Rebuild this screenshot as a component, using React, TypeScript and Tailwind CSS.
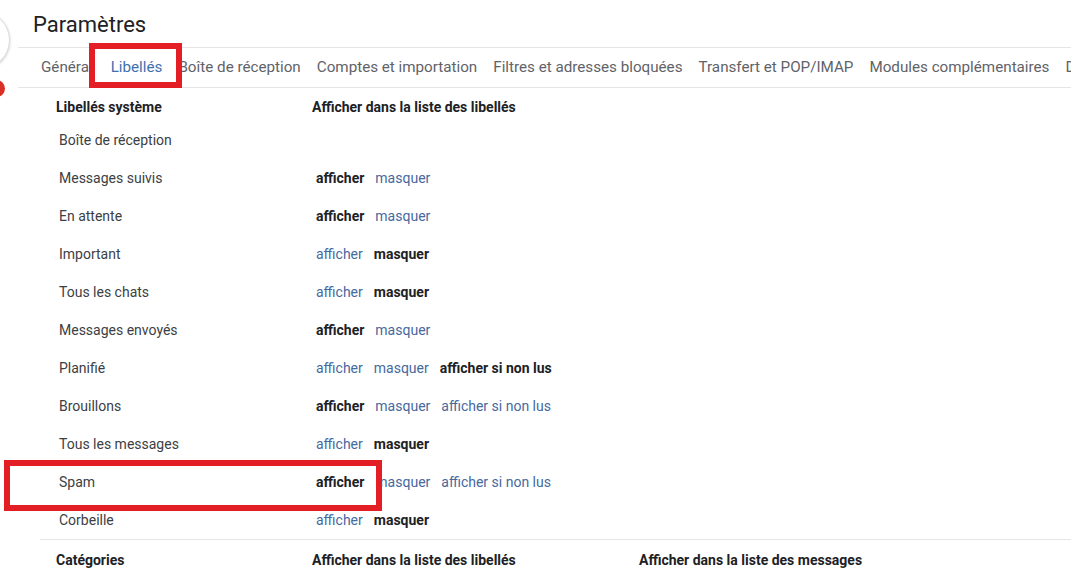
import React from "react";

type Item = { t: string; b: boolean };
const rows: { label: string; items: Item[] }[] = [
  { label: "Boîte de réception", items: [] },
  { label: "Messages suivis", items: [{ t: "afficher", b: true }, { t: "masquer", b: false }] },
  { label: "En attente", items: [{ t: "afficher", b: true }, { t: "masquer", b: false }] },
  { label: "Important", items: [{ t: "afficher", b: false }, { t: "masquer", b: true }] },
  { label: "Tous les chats", items: [{ t: "afficher", b: false }, { t: "masquer", b: true }] },
  { label: "Messages envoyés", items: [{ t: "afficher", b: true }, { t: "masquer", b: false }] },
  {
    label: "Planifié",
    items: [
      { t: "afficher", b: false },
      { t: "masquer", b: false },
      { t: "afficher si non lus", b: true },
    ],
  },
  {
    label: "Brouillons",
    items: [
      { t: "afficher", b: true },
      { t: "masquer", b: false },
      { t: "afficher si non lus", b: false },
    ],
  },
  { label: "Tous les messages", items: [{ t: "afficher", b: false }, { t: "masquer", b: true }] },
  {
    label: "Spam",
    items: [
      { t: "afficher", b: true },
      { t: "masquer", b: false },
      { t: "afficher si non lus", b: false },
    ],
  },
  { label: "Corbeille", items: [{ t: "afficher", b: false }, { t: "masquer", b: true }] },
];

const tabs = [
  "Général",
  "Libellés",
  "Boîte de réception",
  "Comptes et importation",
  "Filtres et adresses bloquées",
  "Transfert et POP/IMAP",
  "Modules complémentaires",
  "Discussion",
];

export default function App() {
  return (
    <div
      className="relative w-[1071px] h-[580px] overflow-hidden bg-white text-[#202124]"
      style={{ fontFamily: "Roboto, 'Noto Sans', sans-serif" }}
    >
      {/* left decorations */}
      <div className="absolute left-[-48px] top-[11px] w-[58px] h-[58px] rounded-full bg-white border border-[#dadce0] shadow-[0_1px_3px_rgba(0,0,0,0.2)]" />
      <div className="absolute left-[-12px] top-[80px] w-[17px] h-[17px] rounded-full bg-[#d93025]" />

      {/* title */}
      <div className="h-[47px] pl-[33px] pt-[11px] text-[22px] leading-[28px] text-[#202124]">
        Paramètres
      </div>

      {/* tabs */}
      <div className="ml-[18px] h-[41px] border-y border-[#e6e6e6] flex items-center whitespace-nowrap text-[15.2px] text-[#5f6368]">
        <div className="flex items-center gap-[16px] pl-[23px]">
          {tabs.map((t, i) => (
            <span key={t} className={i === 1 ? "text-[#3f6fae] ml-[2px]" : ""}>
              {t}
            </span>
          ))}
        </div>
      </div>

      {/* system labels */}
      <div className="ml-[40px] text-[14px]">
        <div className="h-[33px] flex items-center pt-[5px] font-bold text-[#202124]">
          <div className="w-[272px] pl-[16px]">Libellés système</div>
          <div>Afficher dans la liste des libellés</div>
        </div>
        {rows.map((r) => (
          <div key={r.label} className="h-[38px] flex items-center">
            <div className="w-[272px] pl-[19px] text-[#3c4043]">{r.label}</div>
            <div className="pl-[4px] flex gap-[11px]">
              {r.items.map((it, i) => (
                <span
                  key={i}
                  className={it.b ? "font-bold text-[#202124]" : "text-[#46699e]"}
                >
                  {it.t}
                </span>
              ))}
            </div>
          </div>
        ))}
        <div className="h-[39px] border-t border-[#e6e6e6] flex items-center pt-[3px] font-bold text-[#202124]">
          <div className="w-[272px] pl-[16px]">Catégories</div>
          <div className="w-[327px]">Afficher dans la liste des libellés</div>
          <div>Afficher dans la liste des messages</div>
        </div>
      </div>

      {/* annotation boxes */}
      <div className="absolute left-[89px] top-[43px] w-[93px] h-[45px] border-[6px] border-[#e31e25]" />
      <div className="absolute left-[4px] top-[460px] w-[378px] h-[51px] border-[6px] border-[#e31e25]" />
    </div>
  );
}
